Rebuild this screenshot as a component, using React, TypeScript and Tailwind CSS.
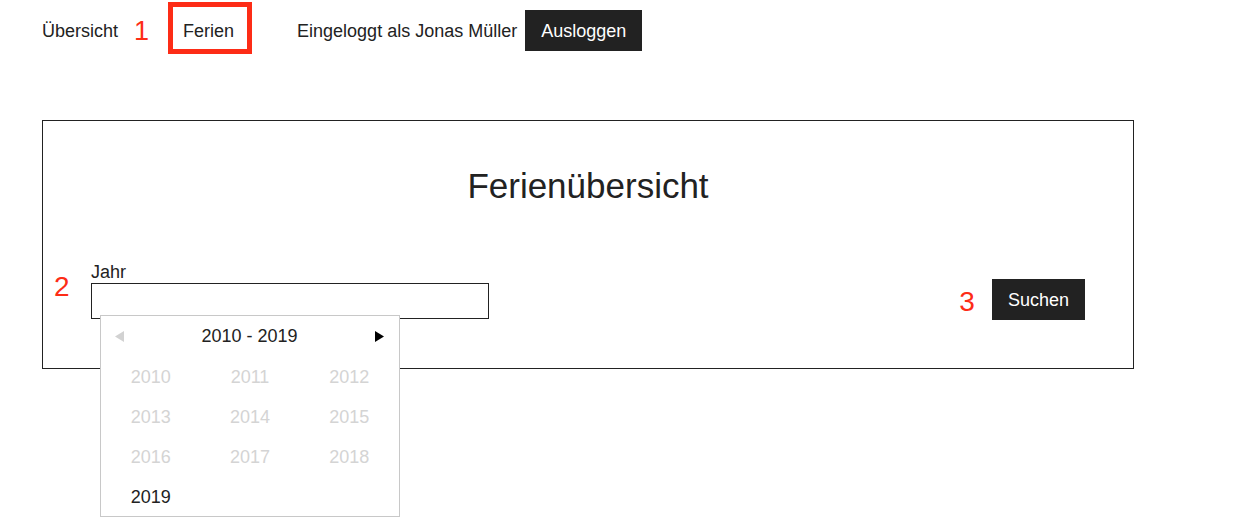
import React from "react";

const years = [2010, 2011, 2012, 2013, 2014, 2015, 2016, 2017, 2018, 2019];

export default function App() {
  return (
    <div className="min-h-[532px] w-[1242px] bg-white font-['Liberation_Sans',Arial,sans-serif] text-[#222]">
      {/* Navigation */}
      <nav className="flex h-[61px] items-center text-[18px] leading-[22px]">
        <a className="ml-[42px]">Übersicht</a>
        <span className="ml-[16px] text-[27px] leading-[32px] text-[#fd2c16]">1</span>
        <div className="ml-[19px] mt-[2px] flex h-[52px] w-[84px] items-center self-start border-[5px] border-[#fd2c16] pl-[10px] pt-[5px]">
          <a>Ferien</a>
        </div>
        <span className="ml-[45px]">Eingeloggt als Jonas Müller</span>
        <button className="ml-[8px] h-[41px] bg-[#222] px-4 text-white">Ausloggen</button>
      </nav>

      {/* Main card */}
      <div className="ml-[42px] mt-[59px] w-[1092px] border border-[#222] pb-[48px] pt-[45px]">
        <h1 className="text-center text-[35px] leading-[40px]">Ferienübersicht</h1>

        <div className="mt-[55px] flex items-start pr-[48px]">
          <div className="w-[48px] pl-[11px] pt-[10px] text-[28px] leading-[32px] text-[#fd2c16]">2</div>
          <div className="flex flex-col">
            <label className="text-[18px] leading-[22px]">Jahr</label>
            <div className="relative">
              <input className="box-border h-[36px] w-[398px] border border-[#222] bg-white outline-none" />
              <div className="absolute left-[9px] top-[32px] z-10 w-[300px] border border-[#c8c8c8] bg-white text-[18px] leading-[22px]">
                <div className="flex h-[41px] items-center justify-between pl-[14px] pr-[15px] pb-[1px]">
                  <svg width="9" height="11" viewBox="0 0 9 11">
                    <polygon points="9,0 9,11 0,5.5" fill="#d2d2d2" />
                  </svg>
                  <span>2010 - 2019</span>
                  <svg width="9" height="11" viewBox="0 0 9 11">
                    <polygon points="0,0 0,11 9,5.5" fill="#000" />
                  </svg>
                </div>
                <div className="grid grid-cols-3">
                  {years.map((y) => (
                    <div
                      key={y}
                      className={
                        "flex items-center justify-center " +
                        (y === 2019 ? "h-[39px] text-[#222]" : "h-[40px] text-[#d4d4d4]")
                      }
                    >
                      {y}
                    </div>
                  ))}
                </div>
              </div>
            </div>
          </div>
          <div className="flex-1" />
          <span className="mr-[17px] mt-[25px] text-[28px] leading-[32px] text-[#fd2c16]">3</span>
          <button className="mt-[18px] h-[41px] bg-[#222] px-4 text-[18px] leading-[22px] text-white">Suchen</button>
        </div>
      </div>
    </div>
  );
}
